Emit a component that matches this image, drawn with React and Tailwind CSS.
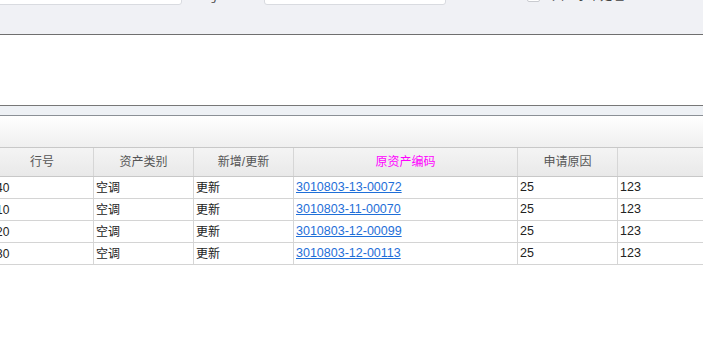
const rows = [
    { no: '40', type: '空调', action: '更新', code: '3010803-13-00072', reason: '25', note: '123' },
    { no: '10', type: '空调', action: '更新', code: '3010803-11-00070', reason: '25', note: '123' },
    { no: '20', type: '空调', action: '更新', code: '3010803-12-00099', reason: '25', note: '123' },
    { no: '30', type: '空调', action: '更新', code: '3010803-12-00113', reason: '25', note: '123' },
];

// column widths include the 1px right border
const cols = ['w-[103px]', 'w-[100px]', 'w-[100px]', 'w-[224px]', 'w-[100px]', 'flex-1'];

function HeaderCell({ width, children, className = '' }) {
    return (
        <div className={`${width} shrink-0 h-full flex items-center justify-center border-r border-[#d6d6d6] ${className}`}>
            {children}
        </div>
    );
}

function Cell({ width, children, className = '' }) {
    return (
        <div className={`${width} shrink-0 h-full flex items-center pl-[2px] border-r border-[#d6d6d6] overflow-hidden whitespace-nowrap ${className}`}>
            {children}
        </div>
    );
}

export default function App() {
    return (
        <div
            className="w-[703px] h-[351px] bg-white overflow-hidden text-[12px] text-[#222]"
            style={{ fontFamily: '"Liberation Sans", "Noto Sans CJK SC", sans-serif' }}
        >
            {/* search form, scrolled mostly out of view */}
            <div className="flex flex-col h-[34px] bg-[#f0f1f5] border-b border-[#6f6f6f] box-content overflow-hidden">
                <div className="flex items-end h-[25px] shrink-0 -mt-[20px]">
                    <div className="w-[202px] -ml-[20px] h-full bg-white border border-[#d9dbe0] rounded-[3px]" />
                    <span className="ml-[24px] w-[46px] leading-[12px] mb-[1px] text-[#444]">任务编号</span>
                    <div className="ml-[12px] w-[182px] h-full bg-white border border-[#d9dbe0] rounded-[3px]" />
                    <div className="ml-[81px] w-[13px] h-[13px] mb-[3px] bg-white border border-[#c9cbd0] rounded-[2px]" />
                    <span className="ml-[12px] leading-[12px] mb-[3px] text-[#444]">只显示未处理</span>
                </div>
            </div>

            <div className="h-[70px] bg-white" />

            {/* grid panel */}
            <div className="border-t border-[#777] bg-[#eef1f5] h-[10px]" />
            <div className="border-t border-[#8b9096] h-[32px] bg-gradient-to-b from-white to-[#efefef]" />

            <div className="overflow-hidden">
                <div className="-ml-[9px] w-[712px]">
                    <div className="flex h-[30px] border-t border-b border-[#c8c8c8] bg-gradient-to-b from-[#f4f4f4] to-[#e9e9e9] text-[#555]">
                        <HeaderCell width={cols[0]}>行号</HeaderCell>
                        <HeaderCell width={cols[1]}>资产类别</HeaderCell>
                        <HeaderCell width={cols[2]}>新增/更新</HeaderCell>
                        <HeaderCell width={cols[3]} className="text-[#ff00ff]">原资产编码</HeaderCell>
                        <HeaderCell width={cols[4]}>申请原因</HeaderCell>
                        <HeaderCell width={cols[5]} className="border-r-0" />
                    </div>
                    {rows.map((r, i) => (
                        <div key={i} className="flex h-[22px] border-b border-[#d4d4d4] bg-white">
                            <Cell width={cols[0]} className="pl-[5px]">{r.no}</Cell>
                            <Cell width={cols[1]}>{r.type}</Cell>
                            <Cell width={cols[2]}>{r.action}</Cell>
                            <Cell width={cols[3]}>
                                <a href="#" className="text-[#1f6fd8] underline text-[12.5px]">{r.code}</a>
                            </Cell>
                            <Cell width={cols[4]} className="text-[12.5px]">{r.reason}</Cell>
                            <Cell width={cols[5]} className="border-r-0 text-[12.5px]">{r.note}</Cell>
                        </div>
                    ))}
                </div>
            </div>
        </div>
    );
}
